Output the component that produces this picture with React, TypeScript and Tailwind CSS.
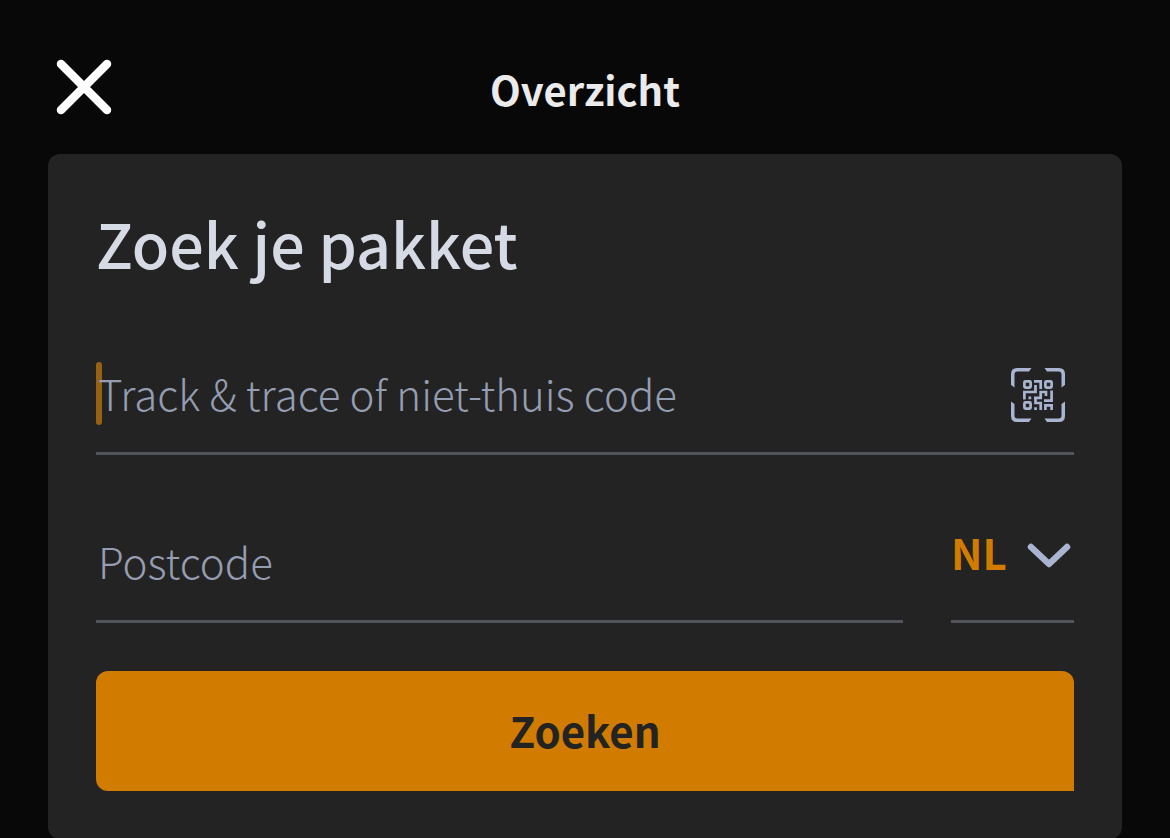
import { useState } from "react";

function CloseIcon() {
  return (
    <svg viewBox="0 0 72 72" className="h-[72px] w-[72px]" fill="none" aria-hidden="true">
      <path d="M13 13 59 59M59 13 13 59" stroke="currentColor" strokeWidth="8.5" strokeLinecap="round" />
    </svg>
  );
}

function ChevronIcon() {
  return (
    <svg viewBox="0 0 44 26" className="h-[26px] w-11" fill="none" aria-hidden="true">
      <path
        d="M4 4 22 21 40 4"
        stroke="currentColor"
        strokeWidth="6.5"
        strokeLinecap="round"
        strokeLinejoin="round"
      />
    </svg>
  );
}

/** QR code inside a scan frame. */
function ScanIcon() {
  return (
    <svg viewBox="0 0 54 54" className="h-[54px] w-[54px]" aria-hidden="true">
      <g fill="currentColor">
        <path d="M0 6Q0 0 6 0H20.5L18 3.5H6.5Q3.5 3.5 3.5 6.5V19.5L0 17Z" />
        <path d="M54 6Q54 0 48 0H33.5L36 3.5H47.5Q50.5 3.5 50.5 6.5V19.5L54 17Z" />
        <path d="M0 48Q0 54 6 54H18L20.5 50.5H6.5Q3.5 50.5 3.5 47.5V36L0 33.5Z" />
        <path d="M54 48Q54 54 48 54H36L33.5 50.5H47.5Q50.5 50.5 50.5 47.5V36L54 33.5Z" />
      </g>
      <g fill="none" stroke="currentColor" strokeWidth="2.7">
        <rect x="13.4" y="13.4" width="6.2" height="6.2" rx="1" />
        <rect x="34.4" y="13.4" width="6.2" height="6.2" rx="1" />
        <rect x="13.4" y="34.4" width="6.2" height="6.2" rx="1" />
        <path d="M23 13.4H29.7V21M24.5 17V24H13.4V31.5" />
        <path d="M17.5 29.8H20.2M23 29.8H29.7V24H35V28M40.6 22.5V32.6H33M24.5 30V35H29.7V42M23.2 40.6H25.9" />
        <path d="M34.4 42V37.4H42M40.6 37.4V42" />
      </g>
    </svg>
  );
}

const inputClass =
  "h-[120px] border-b-[3px] border-[#52545c] bg-transparent pb-0.5 pl-0.5 text-[42px] font-light text-[#949db1] outline-none placeholder:text-[#949db1] placeholder:opacity-100";

export default function App() {
  const [code, setCode] = useState("");
  const [postcode, setPostcode] = useState("");
  const [country, setCountry] = useState("NL");

  return (
    <div className="min-h-screen overflow-hidden bg-[#080808] font-['Noto_Sans_CJK_SC','Noto_Sans',sans-serif]">
      <header className="grid grid-cols-[1fr_auto_1fr] items-center px-12 pt-[51px] pb-[31px]">
        <button type="button" aria-label="Sluiten" className="justify-self-start text-white">
          <CloseIcon />
        </button>
        <h1 className="pt-1 text-[40px] leading-[68px] font-bold text-[#ebebeb]">Overzicht</h1>
      </header>

      <main className="mx-12 rounded-xl bg-[#232323] p-12">
        <h2 className="mb-[52px] text-[61px] leading-[81px] font-medium text-[#d5dae5]">
          Zoek je pakket
        </h2>

        <form className="flex flex-col gap-12" onSubmit={event => event.preventDefault()}>
          <div className="relative">
            {code === "" && (
              <span className="absolute top-[27px] left-0 h-[63px] w-[6px] rounded-full bg-[#976114]" />
            )}
            <input
              type="text"
              aria-label="Track & trace of niet-thuis code"
              placeholder="Track & trace of niet-thuis code"
              value={code}
              onChange={event => setCode(event.target.value)}
              className={`${inputClass} relative w-full pr-20`}
            />
            <button
              type="button"
              aria-label="Scan code"
              className="absolute top-[33px] right-[9px] text-[#a9b4d0]"
            >
              <ScanIcon />
            </button>
          </div>

          <div className="flex gap-12">
            <input
              type="text"
              aria-label="Postcode"
              placeholder="Postcode"
              value={postcode}
              onChange={event => setPostcode(event.target.value)}
              className={`${inputClass} min-w-0 flex-1`}
            />
            <div className="relative w-[123px] shrink-0">
              <select
                aria-label="Land"
                value={country}
                onChange={event => setCountry(event.target.value)}
                className="h-[120px] w-full appearance-none border-b-[3px] border-[#52545c] bg-transparent pb-5 text-[42px] font-bold text-[#d17c00] outline-none"
              >
                <option value="NL">NL</option>
                <option value="BE">BE</option>
              </select>
              <span className="pointer-events-none absolute top-10 right-[3px] text-[#a9b4d0]">
                <ChevronIcon />
              </span>
            </div>
          </div>

          <button
            type="submit"
            className="h-[120px] rounded-xl rounded-br-none bg-[#d17c00] pb-1 text-[42px] font-bold text-[#232323]"
          >
            Zoeken
          </button>
        </form>
      </main>
    </div>
  );
}
